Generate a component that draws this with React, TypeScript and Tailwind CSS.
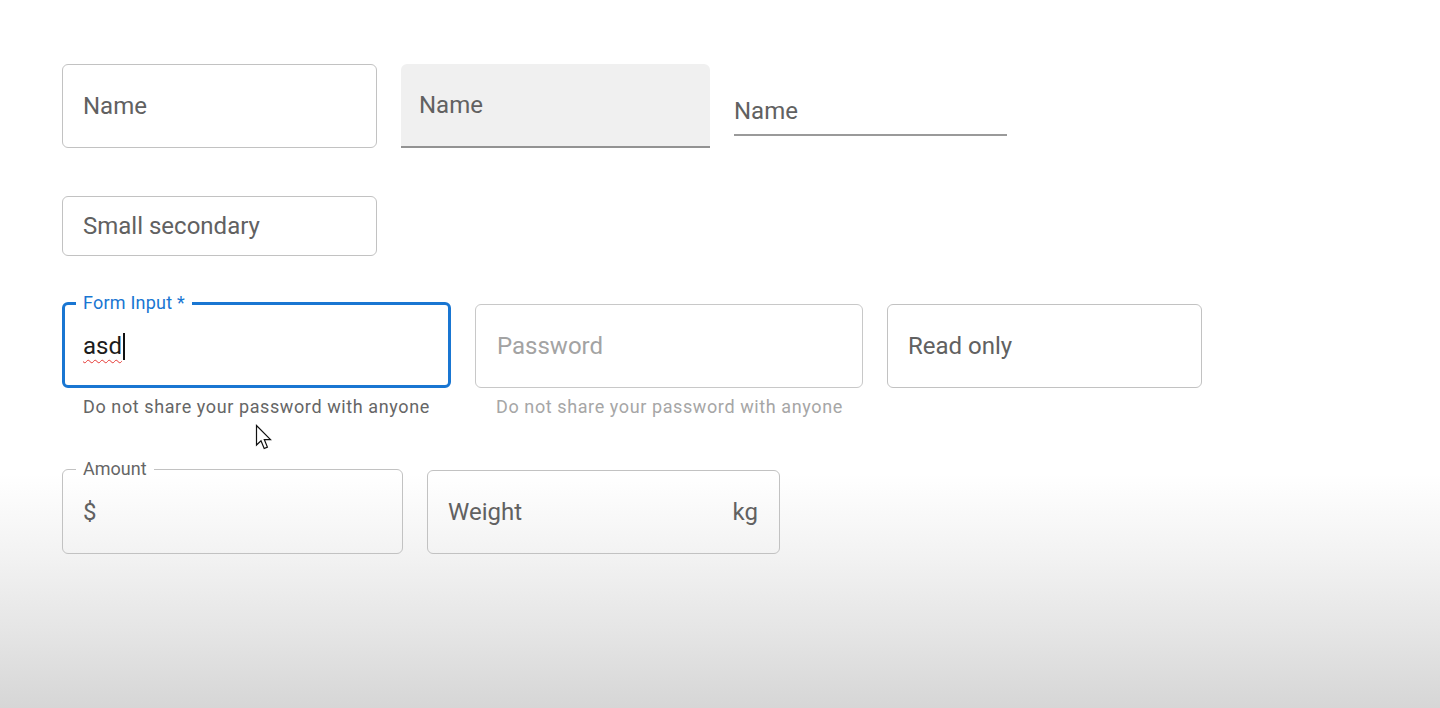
import React from "react";

const font = { fontFamily: "Roboto, 'Noto Sans', Arial, sans-serif" };

function Outlined({
  width,
  height = 84,
  children,
  right,
}: {
  width: string;
  height?: number;
  children: React.ReactNode;
  right?: React.ReactNode;
}) {
  return (
    <div
      className={`${width} ${height === 84 ? "h-[84px]" : "h-[60px]"} flex items-center justify-between rounded-[6px] border border-[#c2c2c2] bg-transparent pl-[20px] pr-[21px] text-[24px] text-[#616161]`}
    >
      <span>{children}</span>
      {right}
    </div>
  );
}

function Notched({
  width,
  label,
  focused,
  children,
  right,
}: {
  width: string;
  label: string;
  focused?: boolean;
  children: React.ReactNode;
  right?: React.ReactNode;
}) {
  return (
    <div className={`relative ${width} h-[84px]`}>
      <fieldset
        className={
          focused
            ? "absolute left-0 right-0 bottom-0 top-[-10px] m-0 rounded-[6px] border-[3px] border-[#1976d2] px-[11px]"
            : "absolute left-0 right-0 bottom-0 top-[-10px] m-0 rounded-[6px] border border-[#c2c2c2] px-[13px]"
        }
      >
        <legend
          className={
            focused
              ? "px-[7px] text-[18px] leading-[18px] tracking-[0.012em] text-[#1976d2]"
              : "px-[7px] text-[18px] leading-[18px] text-[#666666]"
          }
        >
          {label}
        </legend>
      </fieldset>
      <div className="relative flex h-full items-center justify-between px-[21px] text-[24px]">
        {children}
        {right}
      </div>
    </div>
  );
}

function Cursor() {
  return (
    <svg
      className="absolute left-[255px] top-[424px]"
      width="20"
      height="28"
      viewBox="0 0 20 28"
    >
      <path
        d="M1.5 1.5 L1.5 21 L6 16.8 L9.2 24.5 L12.4 23.1 L9.3 15.6 L15.5 15.6 Z"
        fill="#ffffff"
        stroke="#111111"
        strokeWidth="1.2"
        strokeLinejoin="miter"
      />
    </svg>
  );
}

export default function App() {
  return (
    <div
      style={font}
      className="relative h-[708px] w-full overflow-hidden bg-[linear-gradient(to_bottom,#ffffff_0%,#ffffff_67%,#f3f3f3_78%,#e4e4e4_90%,#d6d6d6_100%)]"
    >
      <div className="flex flex-col gap-12 pl-[62px] pt-[64px]">
        {/* Row 1 */}
        <div className="flex items-start gap-6">
          <Outlined width="w-[315px]">Name</Outlined>
          <div className="flex h-[84px] w-[309px] items-center rounded-t-[6px] border-b-2 border-[#939393] bg-[#f0f0f0] px-[18px] text-[24px] text-[#616161]">
            Name
          </div>
          <div className="flex h-[72px] w-[273px] flex-col pt-[24px]">
            <div className="flex flex-1 items-center border-b-2 border-[#9a9a9a] text-[24px] text-[#616161]">
              Name
            </div>
          </div>
        </div>

        {/* Row 2 */}
        <div className="flex">
          <Outlined width="w-[315px]" height={60}>
            Small secondary
          </Outlined>
        </div>

        {/* Row 3 */}
        <div className="flex items-start gap-6">
          <div className="flex w-[389px] flex-col">
            <Notched width="w-[389px]" label="Form Input *" focused>
              <span className="flex items-center text-[#1c1c1c]">
                <span className="underline decoration-[#e53935] decoration-wavy decoration-1 underline-offset-[5px]">
                  asd
                </span>
                <span className="ml-[1px] inline-block h-[27px] w-[2px] bg-[#111]" />
              </span>
            </Notched>
            <div className="mt-[4px] whitespace-nowrap px-[21px] text-[18px] leading-[30px] tracking-[0.03333em] text-[#666666]">
              Do not share your password with anyone
            </div>
          </div>
          <div className="flex w-[388px] flex-col">
            <div className="flex h-[84px] items-center rounded-[6px] border border-[#c8c8c8] px-[21px] text-[24px] text-[#a3a3a3]">
              Password
            </div>
            <div className="mt-[4px] whitespace-nowrap px-[21px] text-[18px] leading-[30px] tracking-[0.03333em] text-[#a6a6a6]">
              Do not share your password with anyone
            </div>
          </div>
          <Outlined width="w-[315px]">Read only</Outlined>
        </div>

        {/* Row 4 */}
        <div className="flex items-start gap-6">
          <Notched width="w-[341px]" label="Amount">
            <span className="text-[#616161]">$</span>
          </Notched>
          <Outlined
            width="w-[353px]"
            right={<span className="text-[#616161]">kg</span>}
          >
            Weight
          </Outlined>
        </div>
      </div>
      <Cursor />
    </div>
  );
}
